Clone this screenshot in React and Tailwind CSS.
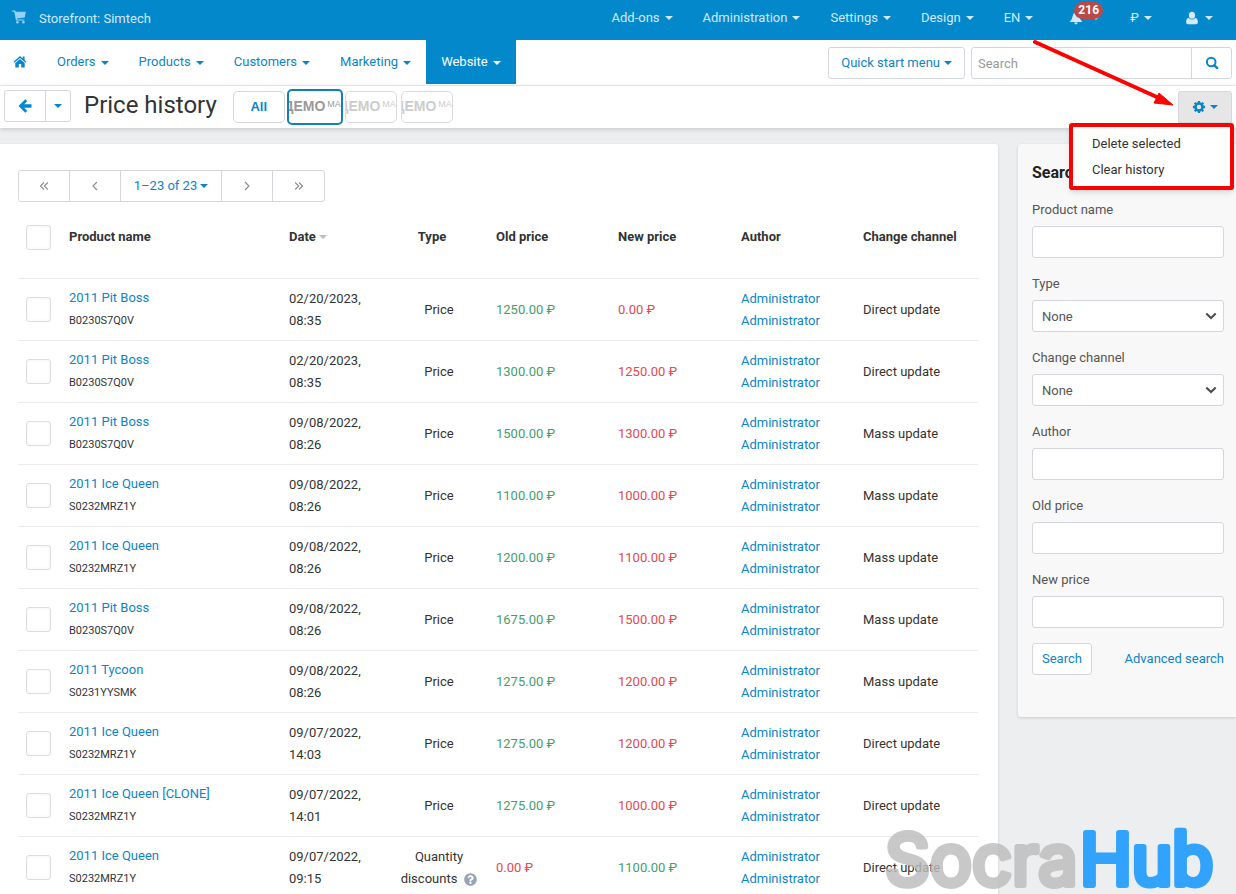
import React from "react";
import { FaQuestionCircle } from "react-icons/fa";

function Icon({ children, className = "size-[14px]" }) {
  return (
    <svg viewBox="0 0 14 14" fill="currentColor" aria-hidden="true" className={"shrink-0 " + className}>
      {children}
    </svg>
  );
}

const CartIcon = ({ className }) => (
  <Icon className={className}>
    <path d="M0.2 0.4 H2.8 Q3.3 0.4 3.5 0.9 L3.8 1.8 H13.8 L12.8 7.4 L5 8.5 L5.2 9.4 H12.4 V10.6 H4.5 Q4.1 10.6 3.9 10.1 L2.2 1.7 H0.2 Z" />
    <circle cx="5.4" cy="12.2" r="1.3" />
    <circle cx="11.4" cy="12.2" r="1.3" />
  </Icon>
);

const HomeIcon = () => (
  <Icon>
    <path d="M7 1 L0.5 6.7 L1.3 7.7 L7 2.9 L12.7 7.7 L13.5 6.7 L11.6 5 V1.6 H9.7 V3.4 Z" />
    <path d="M7 3.9 L2.3 7.9 V12.6 H5.8 V9 H8.2 V12.6 H11.7 V7.9 Z" />
  </Icon>
);

const ArrowIcon = () => (
  <Icon>
    <path d="M7.3 0.6 L8.9 2.2 L5.8 5.6 H13.2 V8.4 H5.8 L8.9 11.8 L7.3 13.4 L0.8 7 Z" stroke="currentColor" strokeWidth="0.6" strokeLinejoin="round" />
  </Icon>
);

const SearchIcon = () => (
  <Icon>
    <circle cx="6.2" cy="6" r="4.3" fill="none" stroke="currentColor" strokeWidth="2" />
    <path d="M9.4 9.3 L12.2 12.1" stroke="currentColor" strokeWidth="2.4" strokeLinecap="round" />
  </Icon>
);

const CogIcon = () => (
  <Icon>
    <circle cx="7" cy="7" r="3.5" fill="none" stroke="currentColor" strokeWidth="2.6" />
    <path
      d="M7 0.9 V3 M7 11 V13.1 M0.9 7 H3 M11 7 H13.1 M2.7 2.7 L4.2 4.2 M9.8 9.8 L11.3 11.3 M2.7 11.3 L4.2 9.8 M9.8 4.2 L11.3 2.7"
      stroke="currentColor"
      strokeWidth="2.3"
    />
  </Icon>
);

const BellIcon = () => (
  <Icon>
    <path d="M7 0.6 Q8 0.6 8 1.6 Q10 2.4 10.3 5 Q10.7 8.6 13.4 11 H0.6 Q3.3 8.6 3.7 5 Q4 2.4 6 1.6 Q6 0.6 7 0.6 Z" />
    <path d="M5.2 11.6 H8.8 Q8.6 13.4 7 13.4 Q5.4 13.4 5.2 11.6 Z" />
  </Icon>
);

const UserIcon = () => (
  <Icon>
    <ellipse cx="7" cy="4.2" rx="3.1" ry="3.5" />
    <path d="M3.7 6.7 Q5 8.6 7 8.6 Q9 8.6 10.3 6.7 Q12.9 7.6 12.9 11 Q12.9 13.2 11 13.2 H3 Q1.1 13.2 1.1 11 Q1.1 7.6 3.7 6.7 Z" />
  </Icon>
);

function Caret({ className = "" }) {
  return (
    <span
      aria-hidden="true"
      className={
        "inline-block h-0 w-0 shrink-0 border-x-4 border-t-4 border-x-transparent border-t-current " +
        className
      }
    />
  );
}

const topMenu = ["Add-ons", "Administration", "Settings", "Design", "EN"];

function TopBar() {
  return (
    <header className="flex h-10 shrink-0 items-start justify-between bg-[#0388cc] pr-[23px] pl-3 text-[#d2eafa]">
      <a href="#storefront" className="flex h-[38px] items-center gap-[13px]">
        <CartIcon className="mb-1 size-[14px] text-[#93d2f5]" />
        <span>Storefront: Simtech</span>
      </a>
      <nav className="flex h-9 items-center gap-[30px]">
        {topMenu.map((label) => (
          <button key={label} type="button" className="flex items-center gap-[5px]">
            {label}
            <Caret />
          </button>
        ))}
        <button
          type="button"
          aria-label="Notifications"
          className="relative ml-[6px] flex items-center gap-[5px]"
        >
          <BellIcon />
          <Caret className="ml-1" />
          <span className="absolute -top-[9px] left-[5px] rounded-full bg-[#b94a48] px-1 text-[12px] leading-[17px] font-bold text-white">
            216
          </span>
        </button>
        <button type="button" className="flex items-center gap-[5px]">
          ₽
          <Caret />
        </button>
        <button type="button" aria-label="Account" className="ml-[3px] flex items-center gap-[6px]">
          <UserIcon />
          <Caret />
        </button>
      </nav>
    </header>
  );
}

const mainMenu = ["Orders", "Products", "Customers", "Marketing"];

function MainNav() {
  return (
    <div className="flex h-[46px] shrink-0 items-start justify-between border-b border-[#f0f0f0] bg-white pr-1 text-[#0e84c4]">
      <nav className="flex h-11 items-stretch">
        <a href="#home" aria-label="Home" className="flex items-center pr-[15px] pl-[13px] text-[#0388cc]">
          <HomeIcon />
        </a>
        {mainMenu.map((label) => (
          <button key={label} type="button" className="flex items-center gap-[5px] px-[15px]">
            {label}
            <Caret className="mt-[2px]" />
          </button>
        ))}
        <button
          type="button"
          className="flex items-center gap-[5px] bg-[#0388cc] px-[15px] text-white"
        >
          Website
          <Caret className="mt-[2px]" />
        </button>
      </nav>
      <div className="mt-[7px] flex gap-[6px]">
        <button
          type="button"
          className="flex h-8 items-center gap-1 rounded-[3px] border border-[#d3d7db] px-3"
        >
          Quick start menu
          <Caret />
        </button>
        <form className="flex h-8 rounded-[3px] border border-[#d3d7db]">
          <input
            type="text"
            aria-label="Search"
            placeholder="Search"
            className="w-[219px] px-[6px] pt-[2px] text-[#555] outline-none placeholder:text-[#999]"
          />
          <button
            type="button"
            aria-label="Run search"
            className="flex w-10 items-center justify-center border-l border-[#d3d7db]"
          >
            <SearchIcon />
          </button>
        </form>
      </div>
    </div>
  );
}

function StoreButton({ active }) {
  return (
    <button
      type="button"
      className={
        "flex items-center justify-end gap-[2px] overflow-hidden bg-white pb-[2px] font-['Liberation_Sans',sans-serif] whitespace-nowrap " +
        (active
          ? "-mx-[2px] h-9 w-14 rounded-[5px] border-2 border-[#1381b5] text-[#999]"
          : "h-8 w-[52px] rounded-[5px] border border-[#d9dcdf] text-[#ccc]")
      }
    >
      <span className="text-[14px] leading-5 font-bold">ДЕМО</span>
      <span className="mb-1 text-[9px] leading-3">МА</span>
    </button>
  );
}

function ActionsMenu() {
  return (
    <div className="relative">
      <button
        type="button"
        aria-label="Actions"
        className="flex h-8 w-[54px] items-center justify-center gap-1 rounded-t-[3px] border border-[#d5d8db] bg-[#e6e6e6] text-[#0e84c4]"
      >
        <CogIcon />
        <Caret />
      </button>
      <svg
        aria-hidden="true"
        className="pointer-events-none absolute -top-[51px] right-[58px] z-20 h-[68px] w-[142px]"
        viewBox="0 0 142 68"
      >
        <path d="M3 2 L127 58" stroke="#fe0000" strokeWidth="4" strokeLinecap="round" />
        <path d="M141 65 L127 53 L122 63 Z" fill="#fe0000" stroke="#fe0000" strokeLinejoin="round" />
      </svg>
      <div className="absolute top-8 -right-[2px] z-10 flex w-[165px] flex-col items-start rounded-[3px] border-4 border-[#fe0000] bg-white pt-1 pb-[3px] pl-[19px] text-[#333] shadow-md">
        <button type="button" className="h-[26px]">
          Delete selected
        </button>
        <button type="button" className="h-[26px]">
          Clear history
        </button>
      </div>
    </div>
  );
}

function Toolbar() {
  return (
    <div className="relative z-10 flex h-[42px] shrink-0 items-center justify-between bg-white pr-1 pl-1 shadow-[0_1px_5px_rgba(0,0,0,0.18)]">
      <div className="flex items-center">
        <div className="mb-[2px] flex h-8 rounded-[3px] border border-[#d3d7db] text-[#0388cc]">
          <button type="button" aria-label="Back" className="flex w-10 items-center justify-center">
            <ArrowIcon />
          </button>
          <button
            type="button"
            aria-label="Recent pages"
            className="flex w-[25px] items-center justify-center border-l border-[#d3d7db]"
          >
            <Caret />
          </button>
        </div>
        <h1 className="mb-1 ml-[13px] text-[24px] leading-8 text-[#333]">Price history</h1>
        <div className="ml-4 flex items-center gap-1">
          <button
            type="button"
            className="h-8 w-[52px] rounded-[5px] border border-[#d3d7db] pb-px font-['Liberation_Sans',sans-serif] font-bold text-[#0388cc]"
          >
            All
          </button>
          <StoreButton active />
          <StoreButton />
          <StoreButton />
        </div>
      </div>
      <ActionsMenu />
    </div>
  );
}

function Chevrons({ double, right }) {
  return (
    <svg
      viewBox="0 0 10 10"
      className={"size-[10px] " + (right ? "-scale-x-100" : "")}
      fill="none"
      stroke="currentColor"
      strokeWidth="1.1"
      aria-hidden="true"
    >
      {double ? <path d="M5 1.5 L1.5 5 L5 8.5 M8.8 1.5 L5.3 5 L8.8 8.5" /> : <path d="M7 1 L3 5 L7 9" />}
    </svg>
  );
}

function Pager() {
  const side = "flex w-[51px] items-center justify-center text-[#8a8a8a]";
  return (
    <div className="flex h-8 w-fit divide-x divide-[#d3d7db] rounded-[3px] border border-[#d3d7db]">
      <button type="button" aria-label="First page" className={side}>
        <Chevrons double />
      </button>
      <button type="button" aria-label="Previous page" className={side}>
        <Chevrons />
      </button>
      <button
        type="button"
        className="flex w-[101px] items-center justify-center gap-[3px] text-[#0e84c4]"
      >
        1–23 of 23
        <Caret />
      </button>
      <button type="button" aria-label="Next page" className={side}>
        <Chevrons right />
      </button>
      <button type="button" aria-label="Last page" className={side}>
        <Chevrons double right />
      </button>
    </div>
  );
}

const BOSS = ["2011 Pit Boss", "B0230S7Q0V"];
const QUEEN = ["2011 Ice Queen", "S0232MRZ1Y"];

const rows = [
  [BOSS, "02/20/2023, 08:35", "1250.00", "0.00", "Direct update"],
  [BOSS, "02/20/2023, 08:35", "1300.00", "1250.00", "Direct update"],
  [BOSS, "09/08/2022, 08:26", "1500.00", "1300.00", "Mass update"],
  [QUEEN, "09/08/2022, 08:26", "1100.00", "1000.00", "Mass update"],
  [QUEEN, "09/08/2022, 08:26", "1200.00", "1100.00", "Mass update"],
  [BOSS, "09/08/2022, 08:26", "1675.00", "1500.00", "Mass update"],
  [["2011 Tycoon", "S0231YYSMK"], "09/08/2022, 08:26", "1275.00", "1200.00", "Mass update"],
  [QUEEN, "09/07/2022, 14:03", "1275.00", "1200.00", "Direct update"],
  [["2011 Ice Queen [CLONE]", "S0232MRZ1Y"], "09/07/2022, 14:01", "1275.00", "1000.00", "Direct update"],
  [QUEEN, "09/07/2022, 09:15", "0.00", "1100.00", "Direct update", true],
];

function Check({ label }) {
  return (
    <input
      type="checkbox"
      aria-label={label}
      className="block size-[25px] appearance-none rounded-[3px] border border-[#dedede] bg-white shadow-[inset_0_0_3px_rgba(0,0,0,0.06)]"
    />
  );
}

const cell = "px-2 pt-[2px]";
const high = cell + " text-[#479d6c]";
const low = cell + " text-[#e4494d]";

function HistoryTable() {
  return (
    <table className="mt-4 w-full table-fixed border-collapse text-left leading-[22px] text-[#333]">
      <colgroup>
        <col className="w-[43px]" />
        <col className="w-[220px]" />
        <col className="w-[109px]" />
        <col className="w-[98px]" />
        <col className="w-[122px]" />
        <col className="w-[123px]" />
        <col className="w-[122px]" />
        <col className="w-[123px]" />
      </colgroup>
      <thead>
        <tr className="h-[60px] align-top">
          <th className="px-2 pt-[7px]">
            <Check label="Select all" />
          </th>
          <th className="px-2 pt-2">Product name</th>
          <th className="px-2 pt-2">
            <span className="flex items-center gap-[3px]">
              Date
              <Caret className="text-[#bbb]" />
            </span>
          </th>
          <th className="pt-2 pr-[22px] pl-2 text-center">Type</th>
          <th className="px-2 pt-2">Old price</th>
          <th className="px-2 pt-2">New price</th>
          <th className="px-2 pt-2">Author</th>
          <th className="px-2 pt-2">Change channel</th>
        </tr>
      </thead>
      <tbody>
        {rows.map(([product, date, oldPrice, newPrice, channel, discount], i) => (
          <tr key={i} className="h-[62px] border-t border-[#ebebeb]">
            <td className="px-2">
              <Check label={"Select " + product[0]} />
            </td>
            <td className="px-2">
              <a href="#product" className="block text-[#0e84c4]">
                {product[0]}
              </a>
              <span className="block pt-px text-[11px] leading-[21px]">{product[1]}</span>
            </td>
            <td className={cell}>{date}</td>
            <td className={cell + " text-center"}>
              {discount ? (
                <>
                  Quantity
                  <br />
                  <span className="inline-flex items-center gap-[7px]">
                    discounts
                    <FaQuestionCircle className="size-[13px] text-[#97a5b5]" />
                  </span>
                </>
              ) : (
                "Price"
              )}
            </td>
            <td className={discount ? low : high}>{oldPrice} ₽</td>
            <td className={discount ? high : low}>{newPrice} ₽</td>
            <td className={cell + " text-[#0e84c4]"}>
              <a href="#author" className="block">
                Administrator
              </a>
              <a href="#author" className="block">
                Administrator
              </a>
            </td>
            <td className={cell}>{channel}</td>
          </tr>
        ))}
      </tbody>
    </table>
  );
}

const field = "h-8 w-full rounded-[3px] border border-[#d3d7db] bg-white";

function Field({ id, label, select }) {
  return (
    <div className="flex flex-col gap-[6px]">
      <label htmlFor={id} className="leading-5">
        {label}
      </label>
      {select ? (
        <div className="relative">
          <select id={id} className={field + " appearance-none px-[9px] pt-[2px] text-[#555]"}>
            <option>None</option>
          </select>
          <svg
            viewBox="0 0 12 8"
            aria-hidden="true"
            className="pointer-events-none absolute top-3 right-[7px] h-2 w-3"
            fill="none"
            stroke="#4a4a4a"
            strokeWidth="2"
          >
            <path d="M1.3 1.5 L6 6 L10.7 1.5" />
          </svg>
        </div>
      ) : (
        <input id={id} type="text" className={field + " px-[9px]"} />
      )}
    </div>
  );
}

function SearchPanel() {
  return (
    <aside className="w-[218px] shrink-0 self-start rounded-l-[3px] bg-[#f8f8f8] pt-[19px] pr-3 pb-[42px] pl-[14px] text-[#555] shadow-[0_1px_3px_rgba(0,0,0,0.15)]">
      <h2 className="mb-[17px] text-[16px] leading-5 font-bold text-[#222]">Search</h2>
      <form className="flex flex-col gap-[15px]">
        <div className="flex flex-col gap-4">
          <Field id="product-name" label="Product name" />
          <Field id="type" label="Type" select />
          <Field id="channel" label="Change channel" select />
          <Field id="author" label="Author" />
          <Field id="old-price" label="Old price" />
          <Field id="new-price" label="New price" />
        </div>
        <div className="flex items-center justify-between text-[#0e84c4]">
          <button type="button" className="h-8 rounded-[3px] border border-[#d3d7db] bg-white px-[9px]">
            Search
          </button>
          <a href="#advanced">Advanced search</a>
        </div>
      </form>
    </aside>
  );
}

function Watermark() {
  return (
    <svg
      role="img"
      aria-label="SocraHub"
      className="pointer-events-none absolute right-0 bottom-0 z-20 h-[74px] w-[356px]"
      viewBox="0 0 356 74"
    >
      <g strokeLinejoin="round" fontWeight="400">
        <text
          x="5"
          y="65"
          fontFamily="Inter, sans-serif"
          fontSize="70"
          strokeWidth="6"
          fill="#bdbdbd"
          stroke="#bdbdbd"
          opacity="0.82"
        >
          Socra
        </text>
        <text
          x="200"
          y="65"
          fontFamily="Roboto, sans-serif"
          fontSize="73"
          strokeWidth="6"
          fill="#32a3fd"
          stroke="#32a3fd"
        >
          Hub
        </text>
      </g>
    </svg>
  );
}

export default function App() {
  return (
    <div className="relative flex h-screen flex-col overflow-hidden bg-[#eceef0] font-[Roboto,sans-serif] text-[13px] leading-5">
      <TopBar />
      <MainNav />
      <Toolbar />
      <main className="flex min-h-0 flex-1 items-start gap-5 pt-4">
        <section className="min-w-0 flex-1 rounded-tr-[3px] bg-white px-5 pt-[26px] pb-5 pl-[18px] shadow-[0_1px_3px_rgba(0,0,0,0.15)]">
          <Pager />
          <HistoryTable />
        </section>
        <SearchPanel />
      </main>
      <Watermark />
    </div>
  );
}
